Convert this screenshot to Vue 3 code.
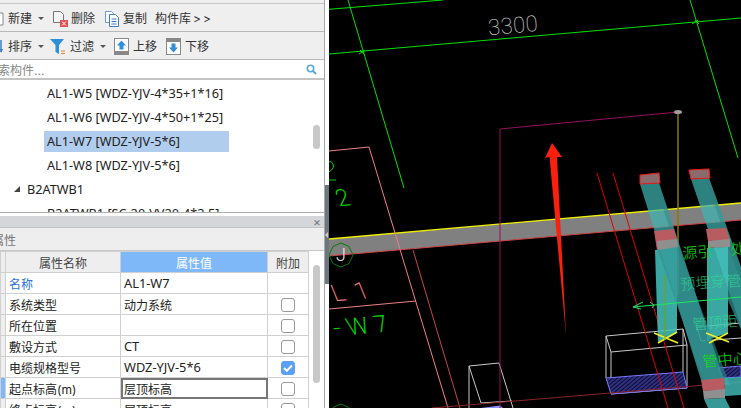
<script setup>
const tree = [
  { text: 'AL1-W5 [WDZ-YJV-4*35+1*16]' },
  { text: 'AL1-W6 [WDZ-YJV-4*50+1*25]' },
  { text: 'AL1-W7 [WDZ-YJV-5*6]', selected: true },
  { text: 'AL1-W8 [WDZ-YJV-5*6]' },
  { text: 'B2ATWB1', group: true },
  { text: 'B2ATWB1 [SC-20-VV20-4*2.5]' }
]

const props = [
  { name: '名称', value: 'AL1-W7', link: true, noCheck: true, latin: true },
  { name: '系统类型', value: '动力系统' },
  { name: '所在位置', value: '' },
  { name: '敷设方式', value: 'CT', latin: true },
  { name: '电缆规格型号', value: 'WDZ-YJV-5*6', checked: true, latin: true },
  { name: '起点标高(m)', value: '层顶标高', editing: true },
  { name: '终点标高(m)', value: '层顶标高' }
]
</script>

<template>
  <div class="screen">
    <aside class="panel">
      <div class="toolbar first">
        <svg class="clip-icon" width="4" height="16" viewBox="0 0 4 16"><path d="M0 2h3v12H0" fill="#fff" stroke="#888" /></svg>
        <span class="tool">新建</span>
        <i class="caret"></i>
        <svg class="icon" width="17" height="18" viewBox="0 0 17 18">
          <path d="M1.5 1.5h7l3 3v8h-10z" fill="#f4f4f4" stroke="#777" />
          <rect x="8" y="10" width="8" height="7" fill="#e05050" />
          <path d="M10 11.5l4 4m0-4l-4 4" stroke="#fff" />
        </svg>
        <span class="tool">删除</span>
        <svg class="icon gap" width="17" height="18" viewBox="0 0 17 18">
          <path d="M1.5 1.5h6l2 2v9h-8z" fill="#fff" stroke="#6d9bc8" />
          <path d="M5.5 4.5h6l3 3v9h-9z" fill="#fff" stroke="#3f7fbf" />
          <path d="M7.5 9h5M7.5 11.5h5M7.5 14h5" stroke="#3f7fbf" />
        </svg>
        <span class="tool">复制</span>
        <span class="tool lib">构件库<em>&gt;&gt;</em></span>
      </div>
      <div class="toolbar second">
        <svg class="clip-icon" width="4" height="16" viewBox="0 0 4 16"><path d="M1 1v12" stroke="#3f7fbf" stroke-width="1.5" /><path d="M0 10l1 4 2-4z" fill="#3f7fbf" /></svg>
        <span class="tool">排序</span>
        <i class="caret"></i>
        <svg class="icon filter" width="16" height="17" viewBox="0 0 16 17">
          <path d="M0 1h14L9 7v9L5.500 14V7z" fill="#2f8fd8" />
          <path d="M11 13h4M11 15.500h4" stroke="#e8823a" />
        </svg>
        <span class="tool">过滤</span>
        <i class="caret"></i>
        <svg class="icon move" width="15" height="17" viewBox="0 0 15 17">
          <rect x=".5" y=".5" width="14" height="16" fill="#fff" stroke="#888" />
          <rect x="0" y="13" width="15" height="4" fill="#888" />
          <path d="M7.500 2.500l4.500 5H9.500v4h-4v-4H3z" fill="#2f8fd8" />
        </svg>
        <span class="tool">上移</span>
        <svg class="icon move" width="15" height="17" viewBox="0 0 15 17">
          <rect x=".5" y=".5" width="14" height="16" fill="#fff" stroke="#888" />
          <rect x="0" y="0" width="15" height="4" fill="#888" />
          <path d="M7.500 14.500l4.500-5H9.500v-4h-4v4H3z" fill="#2f8fd8" />
        </svg>
        <span class="tool">下移</span>
      </div>
      <div class="search">
        <span>索构件...</span>
        <svg width="11" height="11" viewBox="0 0 11 11">
          <circle cx="4.500" cy="4.500" r="3.200" fill="none" stroke="#59a9d8" stroke-width="1.600" />
          <path d="M7 7l3 3" stroke="#59a9d8" stroke-width="2" />
        </svg>
      </div>
      <div class="tree">
        <div v-for="row in tree" :key="row.text" class="tree-row" :class="{ group: row.group }">
          <i v-if="row.group" class="twist"></i>
          <span class="tree-label" :class="{ selected: row.selected }">{{ row.text }}</span>
        </div>
        <div class="thumb tree-thumb"></div>
      </div>
      <div class="dock-head"><span class="close">×</span></div>
      <div class="dock-title"><span>属性</span></div>
      <div class="grid-wrap">
        <table class="grid">
          <colgroup>
            <col class="c-stub" />
            <col class="c-name" />
            <col class="c-value" />
            <col class="c-add" />
          </colgroup>
          <thead>
            <tr>
              <th></th>
              <th>属性名称</th>
              <th class="active">属性值</th>
              <th>附加</th>
            </tr>
          </thead>
          <tbody>
            <tr v-for="p in props" :key="p.name">
              <td class="stub" :class="{ current: p.editing }"></td>
              <td class="name" :class="{ link: p.link }">{{ p.name }}</td>
              <td class="value" :class="{ editing: p.editing, latin: p.latin }">{{ p.value }}</td>
              <td class="add">
                <span v-if="!p.noCheck" class="check" :class="{ on: p.checked }">
                  <svg v-if="p.checked" width="10" height="8" viewBox="0 0 10 8"><path d="M1 4l2.800 2.800L9 1.500" fill="none" stroke="#fff" stroke-width="2" /></svg>
                </span>
              </td>
            </tr>
          </tbody>
        </table>
        <div class="thumb grid-thumb"></div>
      </div>
    </aside>

    <div class="splitter"><div class="grip"></div></div>

    <svg class="cad" width="412" height="408" viewBox="329 0 412 408">
      <defs>
        <pattern id="hatch" width="3" height="3" patternUnits="userSpaceOnUse" patternTransform="rotate(-40)">
          <rect width="3" height="3" fill="#0c0c30" />
          <path d="M0 1h3" stroke="#5a5ae6" stroke-width=".9" />
        </pattern>
      </defs>

      <!-- axis and dimension lines -->
      <g stroke="#00e000" stroke-width="1" fill="none">
        <path d="M329 9.300L443 0M329 54L741 18M348 0L404 188M690 0L738 158" />
        <path d="M359 54l6-4M692 24l6-4M360 50l5 5M695 20l4 4" />
      </g>
      <text class="dim" x="488" y="33" transform="rotate(-5 513 25)">3300</text>

      <!-- beam band -->
      <path d="M329 239L741 203V220L329 256z" fill="#808080" />
      <path d="M329 239L741 203" stroke="#f0f000" stroke-width="1.300" fill="none" />
      <path d="M329 256L741 220" stroke="#d04040" fill="none" />

      <!-- pink wall outline -->
      <g stroke="#f08080" fill="none">
        <path d="M329 151L369 147L448 408M329 309L416 301" />
        <path d="M413 250L460 408" stroke="#c84848" />
      </g>
      <text class="cad-text pink" transform="translate(335 301) rotate(-5) skewX(17)">L 1</text>
      <text class="cad-text green wide" transform="translate(336 336) rotate(-5) skewX(14)">-W7</text>
      <text class="cad-text green" transform="translate(339 206) rotate(-5) skewX(14)">2</text>
      <path d="M329 172q6-4 4-8t-4-2M329 180h7" stroke="#00d000" fill="none" />

      <!-- axis bubbles -->
      <path d="M341 243l8 3.500 4 8.500-4 8.500-8 3.500-8-3.500-4-8.500 4-8.500z" fill="none" stroke="#087a08" />
      <path d="M341 404l8 3.500v1h-16v-1z" fill="none" stroke="#087a08" />
      <text class="bubble" x="336" y="261">J</text>

      <!-- wire boxes -->
      <g stroke="#c8c8c8" fill="none">
        <path d="M469 366L499 363L513 408M469 366V408M469 366L481 403L512 401" />
        <path d="M606 336L683 329L687 345L611 352zM611 352V394L687 388V345M606 336V378M683 329V372" />
        <path d="M697 327L741 323M701 341L741 338M697 327L701 341" />
      </g>
      <path d="M606 378L683 372L687 388L611 394z" fill="url(#hatch)" stroke="#7a7aff" />
      <path d="M718 368L741 366V377L722 378z" fill="url(#hatch)" stroke="#7a7aff" />
      <path d="M481 408L500 405.500L503 408z" fill="#8f8fff" />
      <path d="M432 408L741 382" stroke="#8a2424" fill="none" />

      <!-- thin red lines -->
      <path d="M597 173L668 408M613 173L684 408" stroke="#e00000" fill="none" />

      <!-- magenta outline -->
      <path d="M500 408V129L678 112" stroke="#94105f" fill="none" />
      <path d="M678 112V295" stroke="#8a7a00" stroke-width="1.500" fill="none" />
      <ellipse cx="678" cy="112" rx="4" ry="2" fill="#a89a9a" />

      <!-- red arrow -->
      <path d="M552 143L562 157L557 157L566 335L549.500 157L545 158z" fill="#fa2010" />

      <!-- trays -->
      <g>
        <path d="M640 184L659 183L724 380L701 380z" fill="#3fb4b0" fill-opacity=".72" />
        <path d="M655 184L659 183L724 380L719 380z" fill="#2a8080" fill-opacity=".4" />
        <path d="M691 179L709 178L741 267V327z" fill="#3fb4b0" fill-opacity=".72" />
        <path d="M705 178L709 178L741 267V280z" fill="#2a8080" fill-opacity=".4" />
        <path d="M655 250L677 247V333L658 342z" fill="#45c4c0" fill-opacity=".85" />
        <path d="M707 248L728 247V333L707 340z" fill="#45c4c0" fill-opacity=".85" />
        <path d="M656 245L677 245L730 385L705 385z" fill="#2f8e8e" fill-opacity=".6" />
        <path d="M728 248L741 280V330L728 300z" fill="#2f8e8e" fill-opacity=".75" />
        <path d="M724 378L741 377V395L725 396z" fill="#3fb4b0" fill-opacity=".85" />
        <path d="M704 399L725 398L730 408H708z" fill="#3fb4b0" fill-opacity=".85" />

        <path d="M640 175L659 173L660 183L640 184z" fill="#8a6a6a" stroke="#f01818" />
        <path d="M689 170L709 169L710 178L691 179z" fill="#8a6a6a" stroke="#f01818" />
        <path d="M654 231L674 229L677 240L657 250z" fill="#b85c62" />
        <path d="M657 241L677 239L678 247L658 250z" fill="#8f8f8f" />
        <path d="M706 229L726 228L730 240L708 241z" fill="#b85c62" />
        <path d="M708 241L730 239L730 247L708 248z" fill="#8f8f8f" />
        <path d="M701 380L724 378L725 390L703 391z" fill="#b85c62" />
        <path d="M703 391L725 389V398L704 399z" fill="#8f8f8f" />
      </g>
      <path d="M654 333L678 343M677 332L658 343M706 333L729 342M728 333L709 343" stroke="#f0f020" stroke-width="1.500" fill="none" />
      <path d="M665 275V340" stroke="#70a020" fill="none" />

      <!-- labels seen through the trays -->
      <g class="labels">
        <text x="683" y="259" transform="rotate(-5 683 259)">源引</text>
        <text x="731" y="255" transform="rotate(-5 731 255)">处</text>
        <text class="faint" x="681" y="290" transform="rotate(-5 681 290)">预埋穿</text>
        <text class="faint" x="727" y="287" transform="rotate(-5 727 287)">管</text>
        <text class="faint" x="693" y="330" transform="rotate(-5 693 330)">管顶距</text>
        <text x="703" y="367" transform="rotate(-5 703 367)">管中心</text>
      </g>
      <path d="M633 307L741 297M633 307l10-5M633 307l8 2M654 305l-4-3M654 305l-2 3" stroke="#20e860" fill="none" />
    </svg>
  </div>
</template>

<style scoped>
.screen {
  width: 741px;
  height: 408px;
  display: flex;
  overflow: hidden;
  background: #fff;
  font-family: "Inter", "Noto Sans CJK SC", sans-serif;
  font-size: 12px;
  color: #333;
}

.panel {
  width: 325px;
  flex: none;
  display: flex;
  flex-direction: column;
  border-right: 1px solid #a8a8a8;
  box-sizing: border-box;
  overflow: hidden;
  background: #efefef;
}

.toolbar {
  height: 28px;
  flex: none;
  display: flex;
  align-items: center;
  padding-top: 2px;
  background: #efefef;
  border-bottom: 1px solid #b8b8b8;
  box-sizing: border-box;
  position: relative;
}

.first {
  margin-top: 3px;
  height: 29px;
  border-top: 1px solid #c4c4c4;
}

.clip-icon {
  width: 4px;
  margin-right: 4px;
}

.tool {
  line-height: 16px;
}

.caret {
  width: 0;
  height: 0;
  margin: 0 8px 0 6px;
  border-left: 3px solid transparent;
  border-right: 3px solid transparent;
  border-top: 3px solid #555;
}

.icon {
  margin-right: 2px;
  flex: none;
}

.icon.gap {
  margin-left: 9px;
}

.lib {
  margin-left: 8px;
}

.lib em {
  margin-left: 2px;
  font-style: normal;
  letter-spacing: 2px;
}

.filter {
  margin-left: -2px;
  margin-right: 4px;
}

.move {
  margin-left: 0;
  margin-right: 4px;
}

.second .tool:nth-of-type(3) {
  margin-right: 9px;
}

.search {
  height: 20px;
  flex: none;
  display: flex;
  align-items: center;
  justify-content: space-between;
  padding-right: 7px;
  color: #888;
  background: #fff;
  border-bottom: 2px solid #c4c4c4;
  box-sizing: border-box;
}

.search span {
  margin-left: -2px;
}

.tree {
  height: 133px;
  flex: none;
  padding-top: 1px;
  box-sizing: border-box;
  overflow: hidden;
  position: relative;
  background: #fff;
  border-bottom: 1px solid #b0b0b0;
}

.tree-row {
  height: 24px;
  display: flex;
  align-items: center;
  padding-left: 44px;
  white-space: nowrap;
  color: #222;
}

.tree-row.group {
  padding-left: 14px;
}

.tree-label {
  display: block;
  padding: 0 3px;
  line-height: 21px;
  font-family: "Noto Sans", sans-serif;
  font-size: 12.7px;
}

.tree-label.selected {
  width: 185px;
  box-sizing: border-box;
  background: #b1cdee;
}

.twist {
  width: 0;
  height: 0;
  margin-right: 7px;
  border-left: 6px solid transparent;
  border-bottom: 6px solid #444;
}

.group .tree-label {
  padding: 0;
}

.thumb {
  position: absolute;
  width: 7px;
  background: #c8c8c8;
  border-radius: 4px;
}

.tree-thumb {
  left: 313px;
  top: 45px;
  height: 24px;
}

.dock-head {
  height: 12px;
  flex: none;
  margin-top: 3px;
  display: flex;
  align-items: center;
  justify-content: flex-end;
  padding-right: 3px;
  background: #d4d6da;
  border-bottom: 1px solid #c4c4c4;
  box-sizing: border-box;
  position: relative;
}

.dock-head::before {
  content: "";
  position: absolute;
  left: 0;
  right: 0;
  top: -3px;
  height: 3px;
  background: #fff;
}

.close {
  font-size: 12px;
  line-height: 12px;
  color: #777;
}

.dock-title {
  height: 23px;
  flex: none;
  display: flex;
  align-items: center;
  background: #eee;
  border-bottom: 1px solid #c8c8c8;
  box-sizing: border-box;
  color: #777;
  overflow: hidden;
}

.dock-title span {
  margin-left: -8px;
}

.grid-wrap {
  position: relative;
  flex: 1;
  overflow: hidden;
  background: #fff;
}

.grid {
  width: 308px;
  table-layout: fixed;
  border-collapse: collapse;
}

.c-stub { width: 5px; }
.c-name { width: 115px; }
.c-value { width: 147px; }
.c-add { width: 41px; }

.grid th,
.grid td {
  height: 21px;
  padding: 0 3px;
  border: 1px solid #d0d0d0;
  box-sizing: border-box;
  font-weight: 400;
  white-space: nowrap;
  overflow: hidden;
}

.grid th {
  background: #eee;
  text-align: center;
  color: #444;
}

.grid th.active {
  background: #7fb8f8;
  color: #fff;
}

.grid td {
  color: #222;
}

.grid .value.latin {
  font-family: "Noto Sans", sans-serif;
  font-size: 12.8px;
}

.grid .stub {
  padding: 0;
  background: #efefef;
}

.grid .stub.current {
  background: #7fb8f8;
}

.grid .name.link {
  color: #2a6fdb;
}

.grid .value.editing {
  outline: 2px solid #777;
  outline-offset: -2px;
}

.grid .add {
  text-align: center;
  padding: 0;
}

.check {
  display: inline-flex;
  align-items: center;
  justify-content: center;
  width: 14px;
  height: 14px;
  vertical-align: middle;
  border: 1px solid #999;
  border-radius: 3px;
  box-sizing: border-box;
  background: #fff;
}

.check.on {
  background: #5aa0f5;
  border-color: #5aa0f5;
}

.grid-thumb {
  left: 313px;
  top: 14px;
  height: 118px;
}

.splitter {
  width: 4px;
  flex: none;
  background: #fff;
  position: relative;
}

.grip {
  position: absolute;
  left: 0;
  top: 185px;
  width: 4px;
  height: 99px;
  background: #6b7680;
}

.grip::after {
  content: "";
  position: absolute;
  left: 0;
  top: 47px;
  border-top: 3px solid transparent;
  border-bottom: 3px solid transparent;
  border-right: 3px solid #ccc;
}

.cad {
  flex: none;
  background: #000;
  display: block;
}

.dim {
  font-family: "Roboto", sans-serif;
  font-weight: 100;
  font-size: 22px;
  letter-spacing: 0.5px;
  fill: #e4e4e4;
}

.cad-text {
  font-family: "Roboto", sans-serif;
  font-weight: 100;
  font-size: 23px;
  letter-spacing: 3px;
  stroke-width: 0.4;
}

.cad-text.wide {
  letter-spacing: 7px;
}

.pink {
  fill: #f08080;
  stroke: #f08080;
}

.green {
  fill: #00e000;
  stroke: #00e000;
}

.bubble {
  font-family: "Roboto", sans-serif;
  font-weight: 300;
  font-size: 18px;
  fill: #eee;
}

.labels text {
  font-family: "Noto Sans CJK SC", sans-serif;
  font-size: 15px;
  font-weight: 300;
  fill: #10e010;
}

.labels text.faint {
  fill: #30e090;
  fill-opacity: 0.75;
}
</style>
